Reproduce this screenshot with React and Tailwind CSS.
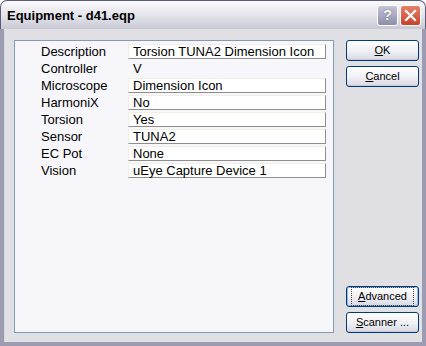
import React from 'react'

const rows = [
  { label: 'Description', value: 'Torsion TUNA2 Dimension Icon', field: true },
  { label: 'Controller', value: 'V', field: false },
  { label: 'Microscope', value: 'Dimension Icon', field: true },
  { label: 'HarmoniX', value: 'No', field: true },
  { label: 'Torsion', value: 'Yes', field: true },
  { label: 'Sensor', value: 'TUNA2', field: true },
  { label: 'EC Pot', value: 'None', field: true },
  { label: 'Vision', value: 'uEye Capture Device 1', field: true },
]

function XpButton({ hot, rest, focused }){
  return (
    <button className={
      'w-[73px] h-[21px] rounded-[3px] border border-[#003c74] bg-gradient-to-b from-white via-[#f1f1f5] to-[#d8d8e4] text-[11px] text-black flex items-center justify-center ' +
      (focused ? 'shadow-[inset_0_0_0_1px_#98b8ea]' : 'shadow-[inset_0_-1px_0_#c8c8d6]')
    }>
      <span className={focused ? 'px-[6px] outline outline-1 outline-dotted outline-[#444]' : ''}>
        <span className="underline underline-offset-[1px]">{hot}</span>{rest}
      </span>
    </button>
  )
}

export default function App(){
  return (
    <div className="w-[426px] h-[346px] flex flex-col bg-white" style={{ fontFamily: '"Liberation Sans", Arial, sans-serif' }}>
      <div className="h-[29px] rounded-t-[7px] border border-b-0 border-[#5c5c76] bg-gradient-to-b from-[#fbfbfc] via-[#e4e4ea] to-[#c9c9d6] flex items-center pl-[6px] pr-[4px] shrink-0">
        <span className="text-[13px] font-bold text-black flex-1 pt-[1px]">Equipment - d41.eqp</span>
        <div className="flex gap-[2px]">
          <div className="w-[21px] h-[21px] rounded-[3px] border border-white bg-gradient-to-b from-[#c4c4d6] to-[#8e8eaa] flex items-center justify-center text-white font-bold text-[15px] [text-shadow:0_0_1px_#333]">?</div>
          <div className="w-[21px] h-[21px] rounded-[3px] border border-white bg-gradient-to-b from-[#e8806a] to-[#c8402a] flex items-center justify-center">
            <svg width="13" height="13" viewBox="0 0 13 13">
              <path d="M2 2 L11 11 M11 2 L2 11" stroke="white" strokeWidth="2.2" strokeLinecap="square" />
            </svg>
          </div>
        </div>
      </div>
      <div className="flex-1 bg-[#e0dfe3] border-x-[4px] border-b-[4px] border-[#9b9bb1] shadow-[inset_1px_0_0_#d8d8e0] flex pl-[10px] pr-[3px] pt-[11px] pb-[9px] gap-[12px]">
        <div className="w-[320px] bg-[#f7f7fb] border border-[#7f9db9] pt-[2px] flex flex-col">
          {rows.map(r => (
            <div key={r.label} className="h-[17px] flex items-center text-[13px] text-black">
              <span className="w-[113px] pl-[26px]">{r.label}</span>
              {r.field ? (
                <div className="w-[198px] h-[15px] bg-white border border-t-[#f0efe2] border-l-[#f0efe2] border-b-[#8e8e8e] border-r-[#8e8e8e] pl-[4px] flex items-center leading-none">{r.value}</div>
              ) : (
                <div className="pl-[5px] leading-none">{r.value}</div>
              )}
            </div>
          ))}
        </div>
        <div className="flex flex-col justify-between">
          <div className="flex flex-col gap-[5px]">
            <XpButton hot="O" rest="K" />
            <XpButton hot="C" rest="ancel" />
          </div>
          <div className="flex flex-col gap-[5px]">
            <XpButton hot="A" rest="dvanced" focused />
            <XpButton hot="S" rest="canner ..." />
          </div>
        </div>
      </div>
    </div>
  )
}
